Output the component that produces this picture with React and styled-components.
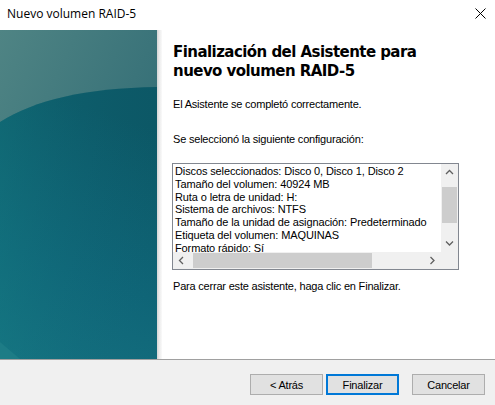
import React from 'react'
import styled, { createGlobalStyle } from 'styled-components'

const GlobalStyle = createGlobalStyle`
  html, body {
    margin: 0;
    padding: 0;
    background: #ffffff;
  }
`

const Window = styled.div`
  width: 495px;
  height: 405px;
  display: flex;
  flex-direction: column;
  background: #ffffff;
  font-family: 'Liberation Sans', Arial, sans-serif;
  color: #000;
  overflow: hidden;
`

const TitleBar = styled.div`
  height: 30px;
  display: flex;
  align-items: center;
  justify-content: space-between;
  padding: 0 9px 3px 7px;
  box-sizing: border-box;
  font-family: 'Open Sans', 'Noto Sans', sans-serif;
  font-size: 12px;
`

const CloseBtn = styled.div`
  width: 12px;
  height: 12px;
  display: flex;
  align-items: center;
  justify-content: center;
`

const Main = styled.div`
  height: 329px;
  display: flex;
`

const SidePanel = styled.div`
  width: 157px;
  height: 100%;
  flex-shrink: 0;
  display: flex;
`

const Shadow = styled.div`
  width: 5px;
  flex-shrink: 0;
  background: linear-gradient(to right, #d4d4d4, #ececec 50%, #fafafa);
`

const Content = styled.div`
  flex: 1;
  padding: 13px 0 0 11px;
  display: flex;
  flex-direction: column;
`

const Heading = styled.h1`
  margin: 0;
  font-family: 'DejaVu Sans', Verdana, sans-serif;
  font-weight: bold;
  font-size: 15px;
  line-height: 19px;
  letter-spacing: -0.55px;
`

const Para = styled.p`
  margin: ${(p) => p.$top || 0}px 0 0 0;
  font-size: 11px;
  line-height: 14px;
  letter-spacing: -0.2px;
`

const ListBox = styled.div`
  margin: 17px 0 0 -1px;
  width: 287px;
  height: 107px;
  box-sizing: border-box;
  border: 1px solid #828790;
  display: grid;
  grid-template-columns: 1fr 17px;
  grid-template-rows: 1fr 17px;
  background: #fff;
`

const ListText = styled.div`
  overflow: hidden;
  padding: 1px 0 0 2px;
  font-size: 11px;
  line-height: 12.8px;
  letter-spacing: -0.12px;
  white-space: nowrap;
`

const VScroll = styled.div`
  background: #f0f0f0;
  display: flex;
  flex-direction: column;
  align-items: center;
`

const HScroll = styled.div`
  background: #f0f0f0;
  display: flex;
  align-items: center;
`

const Corner = styled.div`
  background: #f0f0f0;
`

const Arrow = styled.div`
  width: 17px;
  height: 17px;
  flex-shrink: 0;
  display: flex;
  align-items: center;
  justify-content: center;
`

const VThumb = styled.div`
  width: 15px;
  height: 36px;
  margin-top: 6px;
  background: #cdcdcd;
`

const HThumb = styled.div`
  height: 15px;
  width: 179px;
  margin-left: 3px;
  background: #cdcdcd;
`

const Spacer = styled.div`
  flex: 1;
`

const Separator = styled.div`
  height: 1px;
  background: #a0a0a0;
`

const Footer = styled.div`
  flex: 1;
  background: #f0f0f0;
  display: flex;
  justify-content: flex-end;
  align-items: flex-start;
  padding: 14px 10px 0 0;
`

const Button = styled.button`
  width: 73px;
  height: 21px;
  margin-left: ${(p) => p.$gap || 0}px;
  box-sizing: border-box;
  background: #e1e1e1;
  border: ${(p) => (p.$primary ? '2px solid #0078d7' : '1px solid #adadad')};
  font-family: 'Liberation Sans', Arial, sans-serif;
  font-size: 11px;
  letter-spacing: -0.2px;
  color: #000;
  padding: 0;
`

function PanelArt() {
  return (
    <svg width="157" height="329" viewBox="0 0 157 329">
      <defs>
        <linearGradient id="top" x1="0" y1="0" x2="1" y2="1">
          <stop offset="0" stopColor="#4f8484" />
          <stop offset="1" stopColor="#276470" />
        </linearGradient>
        <linearGradient id="low" x1="0.2" y1="0" x2="0" y2="1">
          <stop offset="0" stopColor="#0c5866" />
          <stop offset="0.6" stopColor="#0f6577" />
          <stop offset="1" stopColor="#146f7f" />
        </linearGradient>
        <linearGradient id="lowR" x1="0" y1="0" x2="1" y2="0">
          <stop offset="0" stopColor="#168085" stopOpacity="0.35" />
          <stop offset="1" stopColor="#10647a" stopOpacity="0" />
        </linearGradient>
      </defs>
      <rect width="157" height="329" fill="url(#top)" />
      <path d="M0 92 C 35 70, 85 58, 157 57 L157 329 L0 329 Z" fill="url(#low)" />
      <path d="M0 92 C 35 70, 85 58, 157 57 L157 329 L0 329 Z" fill="url(#lowR)" />
      <path d="M0 312 L20 329 L0 329 Z" fill="#2a8a8e" opacity="0.4" />
    </svg>
  )
}

function Chevron({ dir }) {
  const paths = {
    up: 'M1 5 L4.5 1.5 L8 5',
    down: 'M1 1.5 L4.5 5 L8 1.5',
    left: 'M5 1 L1.5 4.5 L5 8',
    right: 'M1.5 1 L5 4.5 L1.5 8',
  }
  const wide = dir === 'up' || dir === 'down'
  return (
    <svg width={wide ? 9 : 7} height={wide ? 7 : 9} viewBox={wide ? '0 0 9 7' : '0 0 7 9'}>
      <path d={paths[dir]} fill="none" stroke="#606060" strokeWidth="1.3" />
    </svg>
  )
}

const lines = [
  'Discos seleccionados: Disco 0, Disco 1, Disco 2',
  'Tamaño del volumen: 40924 MB',
  'Ruta o letra de unidad: H:',
  'Sistema de archivos: NTFS',
  'Tamaño de la unidad de asignación: Predeterminado',
  'Etiqueta del volumen: MAQUINAS',
  'Formato rápido: Sí',
]

export default function App() {
  return (
    <>
      <GlobalStyle />
      <Window>
        <TitleBar>
          <span>Nuevo volumen RAID-5</span>
          <CloseBtn>
            <svg width="11" height="11" viewBox="0 0 11 11">
              <path d="M0.5 0.5 L10.5 10.5 M10.5 0.5 L0.5 10.5" stroke="#000" strokeWidth="1" />
            </svg>
          </CloseBtn>
        </TitleBar>
        <Main>
          <SidePanel>
            <PanelArt />
          </SidePanel>
          <Shadow />
          <Content>
            <Heading>
              Finalización del Asistente para
              <br />
              nuevo volumen RAID-5
            </Heading>
            <Para $top={16}>El Asistente se completó correctamente.</Para>
            <Para $top={21}>Se seleccionó la siguiente configuración:</Para>
            <ListBox>
              <ListText>
                {lines.map((l) => (
                  <div key={l}>{l}</div>
                ))}
              </ListText>
              <VScroll>
                <Arrow>
                  <Chevron dir="up" />
                </Arrow>
                <VThumb />
                <Spacer />
                <Arrow>
                  <Chevron dir="down" />
                </Arrow>
              </VScroll>
              <HScroll>
                <Arrow>
                  <Chevron dir="left" />
                </Arrow>
                <HThumb />
                <Spacer />
                <Arrow>
                  <Chevron dir="right" />
                </Arrow>
              </HScroll>
              <Corner />
            </ListBox>
            <Para $top={9}>Para cerrar este asistente, haga clic en Finalizar.</Para>
          </Content>
        </Main>
        <Separator />
        <Footer>
          <Button>&lt; Atrás</Button>
          <Button $primary $gap={3}>
            Finalizar
          </Button>
          <Button $gap={13}>Cancelar</Button>
        </Footer>
      </Window>
    </>
  )
}
